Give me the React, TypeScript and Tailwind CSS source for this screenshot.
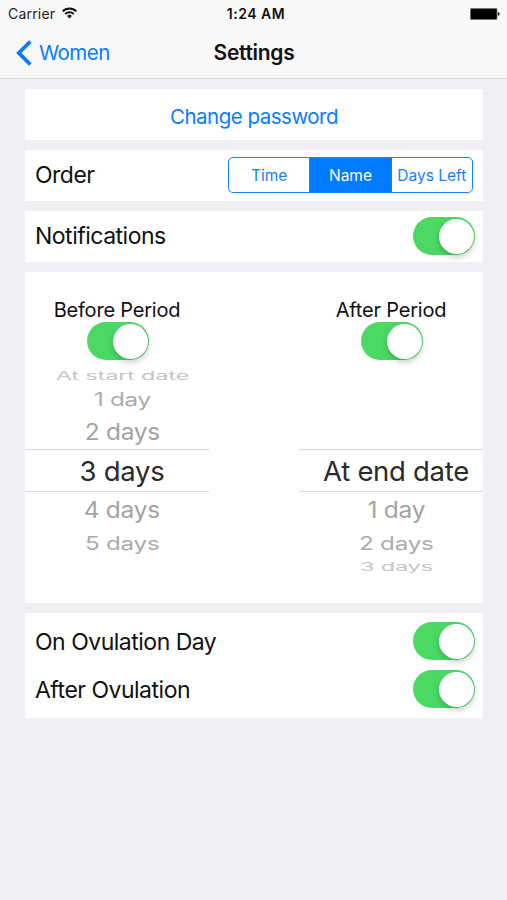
import { useState } from 'react';
import clsx from 'clsx';

function StatusBar() {
    return (
        <div className="relative flex h-7 items-center justify-between pl-2 pr-[7px]">
            <div className="flex items-center gap-[7px]">
                <span className="text-[14px] leading-7 tracking-[0.2px] text-[#222]">Carrier</span>
                <svg className="-mt-0.5" width="15" height="12" viewBox="0 0 15 12" fill="none" stroke="#111" strokeWidth="2">
                    <path d="M0.7 4.4a9.6 9.6 0 0 1 13.6 0" />
                    <path d="M3.2 7.1a6.1 6.1 0 0 1 8.6 0" />
                    <path d="M7.5 11.4 5.1 9a3.4 3.4 0 0 1 4.8 0z" fill="#111" stroke="none" />
                </svg>
            </div>
            <span className="absolute inset-x-0 pl-[5px] text-center text-[14px] font-semibold leading-7 tracking-[0.5px] text-[#111]">1:24 AM</span>
            <svg className="-mt-px" width="30" height="12" viewBox="0 0 30 12">
                <rect x="0.4" y="0.4" width="26.6" height="11.2" rx="1" fill="#000" stroke="#777" strokeWidth="0.8" />
                <path d="M27.8 4.1c2.5.5 2.5 3.3 0 3.8z" fill="#222" />
            </svg>
        </div>
    );
}

function NavBar() {
    return (
        <div className="relative flex h-[50px] items-center pl-4">
            <button className="z-10 flex items-center gap-[7px] text-[#0a7cff]">
                <svg width="16" height="26" viewBox="0 0 16 26" fill="none" stroke="currentColor" strokeWidth="3.8">
                    <path d="M14.3 1.5 2.8 13l11.5 11.5" />
                </svg>
                <span className="text-[20.5px] leading-6 tracking-[-0.55px]">Women</span>
            </button>
            <h1 className="absolute inset-x-0 pl-px text-center text-[21px] font-semibold leading-6 tracking-[-0.3px] text-[#111]">Settings</h1>
        </div>
    );
}

function Toggle() {
    const [on, setOn] = useState(true);

    return (
        <button
            role="switch"
            aria-checked={on}
            onClick={() => setOn(!on)}
            className={clsx(
                'flex h-[38px] w-[62px] shrink-0 items-center rounded-full px-[1.5px]',
                on ? 'justify-end bg-[#4bd964]' : 'justify-start bg-[#e5e5ea]'
            )}
        >
            <span className="size-[35px] rounded-full bg-white shadow-[0_3px_6px_rgba(0,0,0,0.22)]" />
        </button>
    );
}

const orders = ['Time', 'Name', 'Days Left'];

function OrderControl() {
    const [selected, setSelected] = useState('Name');

    return (
        <div className="flex h-9 w-[245px] divide-x divide-[#1a80f5] overflow-hidden rounded-[5px] border-[1.5px] border-[#1a80f5]">
            {orders.map(order => (
                <button
                    key={order}
                    onClick={() => setSelected(order)}
                    className={clsx(
                        'flex-1 whitespace-nowrap pt-0.5 text-[15.5px]',
                        order === selected ? 'bg-[#007aff] text-white' : 'text-[#1a80f5]'
                    )}
                >
                    {order}
                </button>
            ))}
        </div>
    );
}

// Each step away from the selected row is flattened a bit more, like a rotating wheel
const rowStyles = {
    selected: 'h-[43px] border-y border-[#d9d9dc] text-[#2b2b2b]',
    near: 'h-[35px] text-[#a3a3a3]',
    middle: 'h-[31px] text-[#ababab]',
    far: 'h-[16px] text-[#c4c4c4]',
};

const labelStyles = {
    selected: '',
    near: 'scale-x-[0.89] scale-y-[0.82]',
    middle: 'scale-x-[0.88] scale-y-[0.67]',
    far: 'scale-x-[0.86] scale-y-[0.41]',
};

type Row = { label: string; level: keyof typeof rowStyles };

function Wheel({ rows }: { rows: Row[] }) {
    return (
        <div className="flex w-full flex-col">
            {rows.map(row => (
                <div key={row.label} className={clsx('flex items-center justify-center pl-[10px] pt-0.5', rowStyles[row.level])}>
                    <span className={clsx('whitespace-nowrap text-[27.5px] leading-none tracking-[-0.3px]', labelStyles[row.level])}>
                        {row.label}
                    </span>
                </div>
            ))}
        </div>
    );
}

const beforeRows: Row[] = [
    { label: 'At start date', level: 'far' },
    { label: '1 day', level: 'middle' },
    { label: '2 days', level: 'near' },
    { label: '3 days', level: 'selected' },
    { label: '4 days', level: 'near' },
    { label: '5 days', level: 'middle' },
];

const afterRows: Row[] = [
    { label: 'At end date', level: 'selected' },
    { label: '1 day', level: 'near' },
    { label: '2 days', level: 'middle' },
    { label: '3 days', level: 'far' },
];

export default function App() {
    return (
        <div className="h-[900px] w-[507px] overflow-hidden bg-[#efeff4] font-[Inter,sans-serif] text-[#111]">
            <header className="h-[79px] border-b border-[#d8d8dc] bg-[#f8f8f8]">
                <StatusBar />
                <NavBar />
            </header>

            <main className="flex flex-col gap-[10px] pl-[25px] pr-6 pt-[10px]">
                <section className="flex h-[51px] items-center justify-center bg-white pt-[5px]">
                    <button className="text-[20.5px] leading-6 tracking-[-0.5px] text-[#0a7cff]">Change password</button>
                </section>

                <section className="flex h-[51px] items-center justify-between bg-white px-[10px] pb-px">
                    <span className="text-[23px] tracking-[-0.5px]">Order</span>
                    <OrderControl />
                </section>

                <section className="flex h-[51px] items-center justify-between bg-white pb-px pl-[10px] pr-2">
                    <span className="text-[23px] tracking-[-0.5px]">Notifications</span>
                    <Toggle />
                </section>

                <section className="flex h-[331px] justify-between bg-white pt-[26px]">
                    <div className="flex w-[184px] flex-col items-center">
                        <span className="text-[20px] leading-6 tracking-[-0.2px]">Before Period</span>
                        <div className="mb-[7px] pl-[2px]">
                            <Toggle />
                        </div>
                        <Wheel rows={beforeRows} />
                    </div>
                    <div className="flex w-[184px] flex-col items-center">
                        <span className="text-[20px] leading-6 tracking-[-0.2px]">After Period</span>
                        <div className="mb-[89px] pl-[2px]">
                            <Toggle />
                        </div>
                        <Wheel rows={afterRows} />
                    </div>
                </section>

                <section className="flex h-[105px] flex-col gap-[10px] bg-white pl-[10px] pr-2 pt-[9px]">
                    <div className="flex items-center justify-between">
                        <span className="pt-0.5 text-[23px] tracking-[-0.5px]">On Ovulation Day</span>
                        <Toggle />
                    </div>
                    <div className="flex items-center justify-between">
                        <span className="pt-[3px] text-[23px] tracking-[-0.5px]">After Ovulation</span>
                        <Toggle />
                    </div>
                </section>
            </main>
        </div>
    );
}
